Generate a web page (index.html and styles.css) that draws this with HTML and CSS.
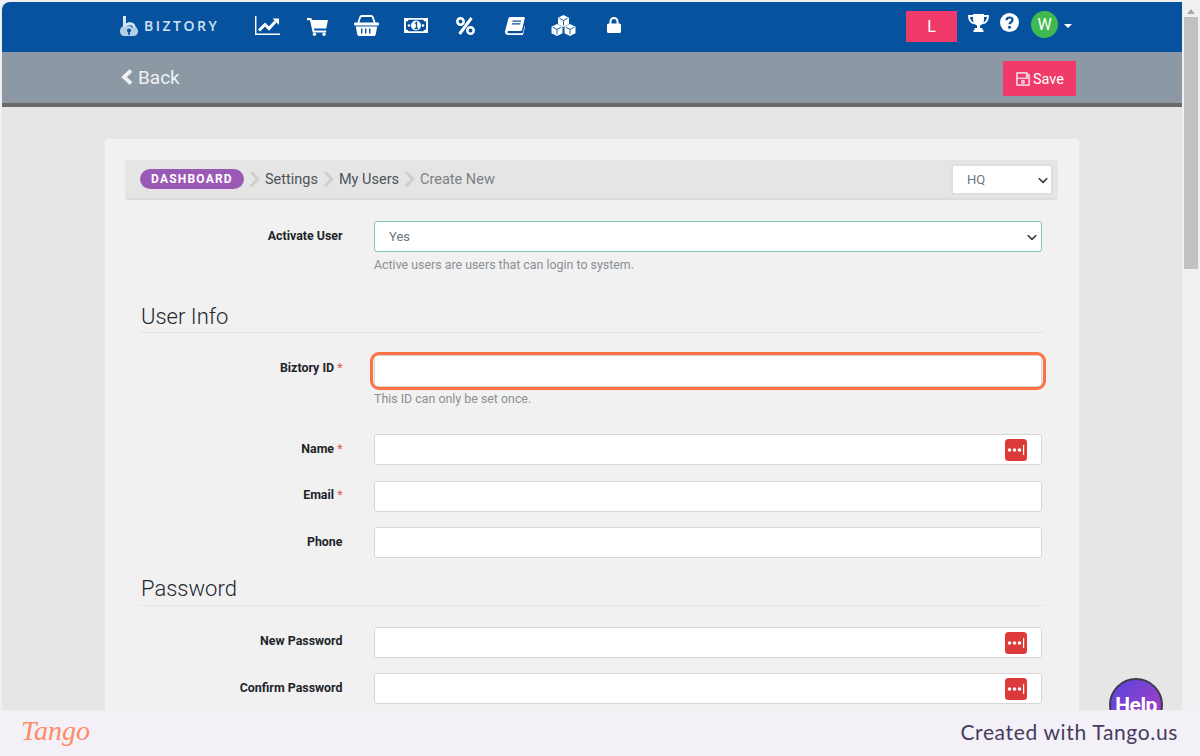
FILE: index.html
```html
<!DOCTYPE html>
<html lang="en">
<head>
<meta charset="utf-8">
<title>Biztory - Create User</title>
<link rel="stylesheet" href="styles.css">
</head>
<body>
<svg class="defs" width="0" height="0" aria-hidden="true">
  <symbol id="chev" viewBox="0 0 10 7"><path d="M.8 1.200 5 5.400l4.200-4.200" fill="none" stroke="#343a40" stroke-width="1.600"/></symbol>
  <symbol id="dots" viewBox="0 0 22 22"><rect width="22" height="22" rx="3.500" fill="#dc3a3a"/><circle cx="4.500" cy="11" r="1.800" fill="#fff"/><circle cx="9.500" cy="11" r="1.800" fill="#fff"/><circle cx="14.500" cy="11" r="1.800" fill="#fff"/><rect x="18" y="6" width="1.200" height="10" fill="#fff"/></symbol>
  <symbol id="cube" viewBox="0 0 12 12"><path d="M6 0l5.500 2.700v6.600L6 12 .5 9.300V2.700z" fill="#fff"/><path d="M1.800 3.300 6 5.400l4.200-2.100M6 5.400v5" fill="none" stroke="#07529f" stroke-width=".9"/></symbol>
</svg>
<div class="screen">
  <div class="browser">
    <div class="page">
      <header class="topbar">
        <div class="brand">
          <svg class="brand-mark" viewBox="0 0 18 20"><path d="M3 0h3v7.500c1-.8 2.400-1.200 3.800-1.200 3.600 0 6 2.400 6 5.600H13c0-1.800-1.300-3-3.200-3S6.500 10 6 11.500H3z" fill="#d7e6f3"/><path d="M4.500 10C2 10 0 12 0 15s2 5 4.500 5h9c2.500 0 4.500-2 4.500-5 0-2-1-3.500-2.500-4.300-.8 1-2.500 1.300-3.500 1-.5-1.500-1.800-2.200-3-2.200-1.800 0-3 1-3.500 2z" fill="#b6cfe6"/><circle cx="9" cy="14.500" r="2" fill="#07529f"/><rect x="8.200" y="15" width="1.600" height="4" fill="#07529f"/></svg>
          <span class="brand-name">BIZTORY</span>
        </div>
        <nav class="mainnav">
          <svg class="i-chart" viewBox="0 0 25 19"><path d="M.7 0v18.200H25" fill="none" stroke="#fff" stroke-width="1.500"/><path d="M4 14.500 10 8.500l4 4 6.500-7" fill="none" stroke="#fff" stroke-width="3"/><path d="M17.500 2.500H24V9z" fill="#fff"/></svg>
          <svg class="i-cart" viewBox="0 0 21 18"><path d="M0 0h4.300l.7 2H21l-1.800 8.500H7l.4 2h11.800v2H5.700L3 2.200H0z" fill="#fff"/><circle cx="7.500" cy="16.300" r="1.700" fill="#fff"/><circle cx="17" cy="16.300" r="1.700" fill="#fff"/></svg>
          <svg class="i-basket" viewBox="0 0 25 21"><path d="M4 9 6 2.500C6.300 1.400 7 1 8 1h9c1 0 1.700.4 2 1.500L21 9" fill="none" stroke="#fff" stroke-width="1.800"/><rect y="7.500" width="25" height="3" rx="1" fill="#fff"/><path fill-rule="evenodd" d="M1.800 11.500h21.400l-1.500 8c-.2.900-.8 1.500-1.700 1.500H5c-.9 0-1.500-.6-1.700-1.500zM7 13.500v5h1.400v-5zm4 0v5h1.400v-5zm4 0v5h1.400v-5z" fill="#fff"/></svg>
          <svg class="i-money" viewBox="0 0 24 15"><path fill-rule="evenodd" d="M0 0h24v15H0zm2 3.500v8c1.500 0 2.500 1 2.500 1.800h15c0-1 1-1.800 2.500-1.800v-8c-1.500 0-2.500-.8-2.500-1.800h-15C4.500 2.700 3.500 3.500 2 3.500z" fill="#fff"/><circle cx="12" cy="7.500" r="5" fill="#fff"/><path d="M11 5.500l1.500-1v6M10.500 10.500h3.500" fill="none" stroke="#07529f" stroke-width="1.300"/><circle cx="5" cy="7.500" r="1.300" fill="#fff"/><circle cx="19" cy="7.500" r="1.300" fill="#fff"/></svg>
          <svg class="i-percent" viewBox="0 0 19 18"><circle cx="4.500" cy="4.500" r="3.200" fill="none" stroke="#fff" stroke-width="2.500"/><circle cx="14.500" cy="13.500" r="3.200" fill="none" stroke="#fff" stroke-width="2.500"/><path d="M15.500 1 3.500 17" stroke="#fff" stroke-width="3"/></svg>
          <svg class="i-book" viewBox="0 0 20 18"><path fill-rule="evenodd" d="M5.500 0H19c.8 0 1 .5.800 1.200L17 13c-.2.800-.7 1-1.500 1H4c-1.200 0-1.700.5-1.700 1.100S2.800 16.300 4 16.300h13c.5 0 .8-.2 1-.7l1.500-6.800.5.600-1.700 7.600c-.2.700-.6 1-1.300 1H3.500C1.300 18 0 16.700 0 15c0-.5 0-1 .2-1.500L3.400 1.600C3.700.6 4.400 0 5.500 0zm2.200 3.500-.3 1.200h8.500l.3-1.200zM7 6.300l-.3 1.200h8.500l.3-1.200z" fill="#fff"/></svg>
          <svg class="i-cubes" viewBox="0 0 27 21"><use href="#cube" x="7.500" y="0" width="12" height="12"/><use href="#cube" x="1" y="9" width="12" height="12"/><use href="#cube" x="14" y="9" width="12" height="12"/></svg>
          <svg class="i-lock" viewBox="0 0 14 16"><path d="M3.500 7V4.500a3.500 3.500 0 0 1 7 0V7" fill="none" stroke="#fff" stroke-width="2"/><rect y="6.500" width="14" height="9.500" rx="1.500" fill="#fff"/></svg>
        </nav>
        <div class="userbar">
          <button class="btn-l">L</button>
          <svg class="i-trophy" viewBox="0 0 21 18"><path d="M5 0h11v6c0 3-2 5-4 5.500V14h2.500v2.500h-8V14H9v-2.500C7 11 5 9 5 6z" fill="#fff"/><path d="M5 2H1c0 4 1.500 6.500 5 7.500M16 2h4c0 4-1.500 6.500-5 7.500" fill="none" stroke="#fff" stroke-width="1.800"/><rect x="5.500" y="16" width="10" height="2" fill="#fff"/></svg>
          <svg class="i-help" viewBox="0 0 19 19"><circle cx="9.500" cy="9.500" r="9.500" fill="#fff"/><path d="M6.500 7.200c0-1.800 1.300-2.700 3-2.700s3 1 3 2.500c0 2.300-3 2.200-3 4.300" fill="none" stroke="#07529f" stroke-width="2.200"/><circle cx="9.500" cy="14.300" r="1.500" fill="#07529f"/></svg>
          <span class="avatar">W</span>
          <span class="caret"></span>
        </div>
      </header>
      <div class="subbar">
        <a class="back">
          <svg class="i-back" viewBox="0 0 12 16"><path d="M10 1.500 3 8l7 6.500" fill="none" stroke="#eef1f3" stroke-width="3.800"/></svg>
          <span>Back</span>
        </a>
        <button class="btn-save">
          <svg class="i-save" viewBox="0 0 14 14"><path fill-rule="evenodd" d="M1.500 0H11l3 3v9.500c0 .8-.7 1.500-1.500 1.500h-11C.7 14 0 13.300 0 12.500v-11C0 .7.700 0 1.500 0zm.3 1.800v3.700h8V1.800zm5.200 6a2 2 0 1 0 0 4.200 2 2 0 0 0 0-4.200zM1.800 7v5.200h10.400V4L12 3.700V7z" fill="#f6c8d6"/></svg>
          <span class="save-text">Save</span>
        </button>
      </div>
      <main class="content">
        <section class="card">
          <div class="crumbs">
            <span class="badge">DASHBOARD</span>
            <span class="sep"></span><span class="crumb">Settings</span>
            <span class="sep"></span><span class="crumb">My Users</span>
            <span class="sep"></span><span class="crumb crumb-now">Create New</span>
            <div class="select-wrap branch">
              <select class="select"><option>HQ</option></select>
              <svg class="chev"><use href="#chev"/></svg>
            </div>
          </div>
          <form class="form">
            <div class="row row-first">
              <label class="label">Activate User</label>
              <div class="control">
                <div class="select-wrap">
                  <select class="select select-ok"><option>Yes</option></select>
                  <svg class="chev"><use href="#chev"/></svg>
                </div>
                <p class="hint">Active users are users that can login to system.</p>
              </div>
            </div>
            <h2 class="section section-info">User Info</h2>
            <div class="row row-id">
              <label class="label">Biztory ID <em>*</em></label>
              <div class="control">
                <div class="marked"><input class="input" type="text"></div>
                <p class="hint hint-id">This ID can only be set once.</p>
              </div>
            </div>
            <div class="row row-name">
              <label class="label">Name <em>*</em></label>
              <div class="control"><input class="input" type="text"><svg class="pm"><use href="#dots"/></svg></div>
            </div>
            <div class="row row-email">
              <label class="label">Email <em>*</em></label>
              <div class="control"><input class="input" type="text"></div>
            </div>
            <div class="row row-phone">
              <label class="label">Phone</label>
              <div class="control"><input class="input" type="text"></div>
            </div>
            <h2 class="section section-pass">Password</h2>
            <div class="row row-newp">
              <label class="label">New Password</label>
              <div class="control"><input class="input" type="password"><svg class="pm"><use href="#dots"/></svg></div>
            </div>
            <div class="row row-conf">
              <label class="label">Confirm Password</label>
              <div class="control"><input class="input" type="password"><svg class="pm"><use href="#dots"/></svg></div>
            </div>
          </form>
        </section>
      </main>
    </div>
    <aside class="scrollbar">
      <span class="arrow"></span>
      <span class="thumb"></span>
    </aside>
  </div>
  <button class="help">Help</button>
  <footer class="tango">
    <span class="tango-logo">Tango</span>
    <span class="tango-text">Created with Tango.us</span>
  </footer>
</div>
</body>
</html>
```

FILE: styles.css
```css
* { box-sizing: border-box; }
html, body { margin: 0; padding: 0; }
body { font-family: Roboto, "Liberation Sans", sans-serif; background: #f3f1f7; }
.defs { position: absolute; }
.screen { position: relative; width: 1200px; height: 756px; overflow: hidden; background: #f3f1f7; }

.browser { display: flex; height: 710px; padding: 2px 2px 0 2px; gap: 2px; background: #f1f1f3; }
.page { width: 1180px; height: 708px; overflow: hidden; border-radius: 8px 0 0 0; background: #e6e6e6; }

.topbar { display: flex; align-items: center; height: 50px; padding-left: 118px; background: #07529f; }
.brand { display: flex; align-items: center; width: 135px; margin-top: -3px; }
.brand-mark { width: 18px; height: 20px; margin-right: 6px; }
.brand-name { font-family: "Open Sans", sans-serif; font-size: 14px; font-weight: 600; letter-spacing: 2.500px; color: #d3e2f1; }
.mainnav { display: flex; align-items: flex-start; height: 50px; }
.mainnav svg { display: block; flex: none; }
.i-chart { width: 25px; height: 19px; margin-top: 14px; }
.i-cart { width: 21px; height: 18px; margin-left: 27px; margin-top: 16px; }
.i-basket { width: 25px; height: 21px; margin-left: 26px; margin-top: 13px; }
.i-money { width: 24px; height: 15px; margin-left: 25px; margin-top: 16px; }
.i-percent { width: 19px; height: 18px; margin-left: 28px; margin-top: 15px; }
.i-book { width: 20px; height: 18px; margin-left: 30px; margin-top: 15px; }
.i-cubes { width: 27px; height: 21px; margin-left: 25px; margin-top: 13px; }
.i-lock { width: 14px; height: 16px; margin-left: 30px; margin-top: 15px; }

.userbar { display: flex; align-items: flex-start; margin-left: auto; height: 50px; padding-top: 9px; padding-right: 110px; }
.btn-l { width: 51px; height: 31px; border: 0; padding: 0; background: #ef3a6a; color: #fff; font: 400 16px Roboto, sans-serif; }
.i-trophy { width: 21px; height: 18px; margin-left: 11px; margin-top: 3px; }
.i-help { width: 19px; height: 19px; margin-left: 11px; margin-top: 2px; }
.avatar { display: flex; align-items: center; justify-content: center; width: 27px; height: 27px; margin-left: 12px; border-radius: 50%; background: #3fba50; color: #fff; font-size: 16px; }
.caret { width: 0; height: 0; margin-left: 6px; margin-top: 13px; border: 4px solid transparent; border-top: 4px solid #fff; border-bottom: 0; }

.subbar { display: flex; align-items: flex-start; justify-content: space-between; height: 55px; padding: 9px 106px 0 119px; background: #8c98a3; border-bottom: 4px solid #6b6b6b; }
.back { display: flex; align-items: center; gap: 5px; height: 32px; color: #eef1f3; font-size: 19px; font-weight: 400; }
.i-back { width: 12px; height: 16px; margin-top: -1px; }
.btn-save { display: flex; align-items: center; justify-content: center; gap: 3px; width: 73px; height: 35px; border: 0; padding: 0 0 0 1px; background: #ef3a6a; color: #fff; font: 400 14.500px Roboto, sans-serif; }
.i-save { width: 14px; height: 14px; }
.save-text { padding-top: 1px; }

.content { padding: 32px 0 0 103px; }
.card { width: 974px; height: 640px; padding: 21px 21px 0 20px; background: #f1f1f1; border-radius: 4px; }
.crumbs { display: flex; align-items: center; height: 40px; padding-left: 15px; background: #e5e5e5; border-bottom: 2px solid #dcdcdc; border-radius: 4px; color: #4d545a; font-size: 14.500px; }
.badge { display: flex; align-items: center; justify-content: center; width: 104px; height: 20px; border-radius: 10px; background: #9b59b6; color: #fff; font-size: 12px; font-weight: 700; letter-spacing: 1.200px; }
.sep { width: 11px; height: 15px; margin: 0 5px 0 5px; background: #cfcfcf; clip-path: polygon(0 0, 35% 0, 100% 50%, 35% 100%, 0 100%, 60% 50%); }
.crumb-now { color: #7b8186; }
.select-wrap { position: relative; }
.branch { width: 102px; margin-left: auto; margin-right: 5px; margin-top: 1px; }
.select { display: block; width: 100%; height: 31px; padding: 0 14px; border: 1px solid #d4d4d4; border-radius: 3px; background: #fff; appearance: none; color: #6c757d; font: 400 13px Roboto, sans-serif; }
.branch .select { border-width: 2px; border-color: #dedede; padding-left: 14px; }
.select-ok { border-color: #7cc8aa; }
.chev { position: absolute; top: 13px; right: 5px; width: 10px; height: 7px; }

.form { width: 919px; padding-left: 15px; }
.row { display: flex; position: relative; }
.label { width: 202.500px; flex: none; text-align: right; color: #212529; font-size: 12.400px; font-weight: 700; line-height: 14px; }
.label em { color: #e0555a; font-style: normal; font-weight: 400; }
.control { position: relative; width: 668px; margin-left: 31.500px; }
.input { display: block; width: 100%; height: 31px; padding: 0 14px; border: 1px solid #d6d6d6; border-radius: 3px; background: #fff; }
.hint { margin: 6px 0 0; color: #8a9095; font-size: 12.400px; line-height: 14px; }
.hint-id { margin-top: 5px; }
.pm { position: absolute; top: 5px; right: 15px; width: 22px; height: 22px; }
.section { margin: 0; padding-bottom: 4px; padding-left: 1px; border-bottom: 1px solid #e4e4e4; color: #23282d; font-size: 22px; font-weight: 300; line-height: 26px; }

.row-first { margin-top: 21px; }
.row-first .label { padding-top: 8px; }
.section-info { margin-top: 30px; height: 31px; padding-top: 2px; }
.row-id { margin-top: 22px; }
.row-id .label { padding-top: 6px; }
.marked { position: relative; }
.marked::after { content: ""; position: absolute; inset: -3px -4px; border: 3px solid #ff7043; border-radius: 9px; }
.marked .input { height: 32px; }
.row-name { margin-top: 28px; }
.row-name .label, .row-phone .label, .row-conf .label { padding-top: 8px; }
.row-email .label, .row-newp .label { padding-top: 7px; }
.row-email { margin-top: 16px; }
.row-phone { margin-top: 15px; }
.section-pass { margin-top: 18px; height: 30px; }
.row-newp { margin-top: 21px; }
.row-conf { margin-top: 15px; }

.scrollbar { position: relative; display: flex; flex-direction: column; align-items: stretch; width: 14px; height: 708px; }
.arrow { width: 0; height: 0; margin: 7px 0 3px 3px; border: 4px solid transparent; border-bottom: 5px solid #a8a8a8; border-top: 0; }
.thumb { width: 14px; height: 252px; background: #c1c1c1; }

.help { position: absolute; left: 1109px; top: 678px; width: 54px; height: 54px; border: 2px solid #3c3c4e; border-radius: 50%; padding: 0; background: linear-gradient(135deg, #5a45de, #b03cc0); color: #fff; font: 700 21px Roboto, sans-serif; letter-spacing: -0.500px; }

.tango { position: absolute; left: 0; right: 0; bottom: 0; display: flex; align-items: center; justify-content: space-between; height: 46px; padding: 0 22px 4px 21px; background: #f3f1f7; border-radius: 0 0 10px 10px; }
.tango-logo { font-family: "Liberation Serif", serif; font-style: italic; font-size: 28px; color: #ff8a66; }
.tango-text { font-family: Lato, sans-serif; font-size: 21px; letter-spacing: 0.650px; color: #463b60; }
```
